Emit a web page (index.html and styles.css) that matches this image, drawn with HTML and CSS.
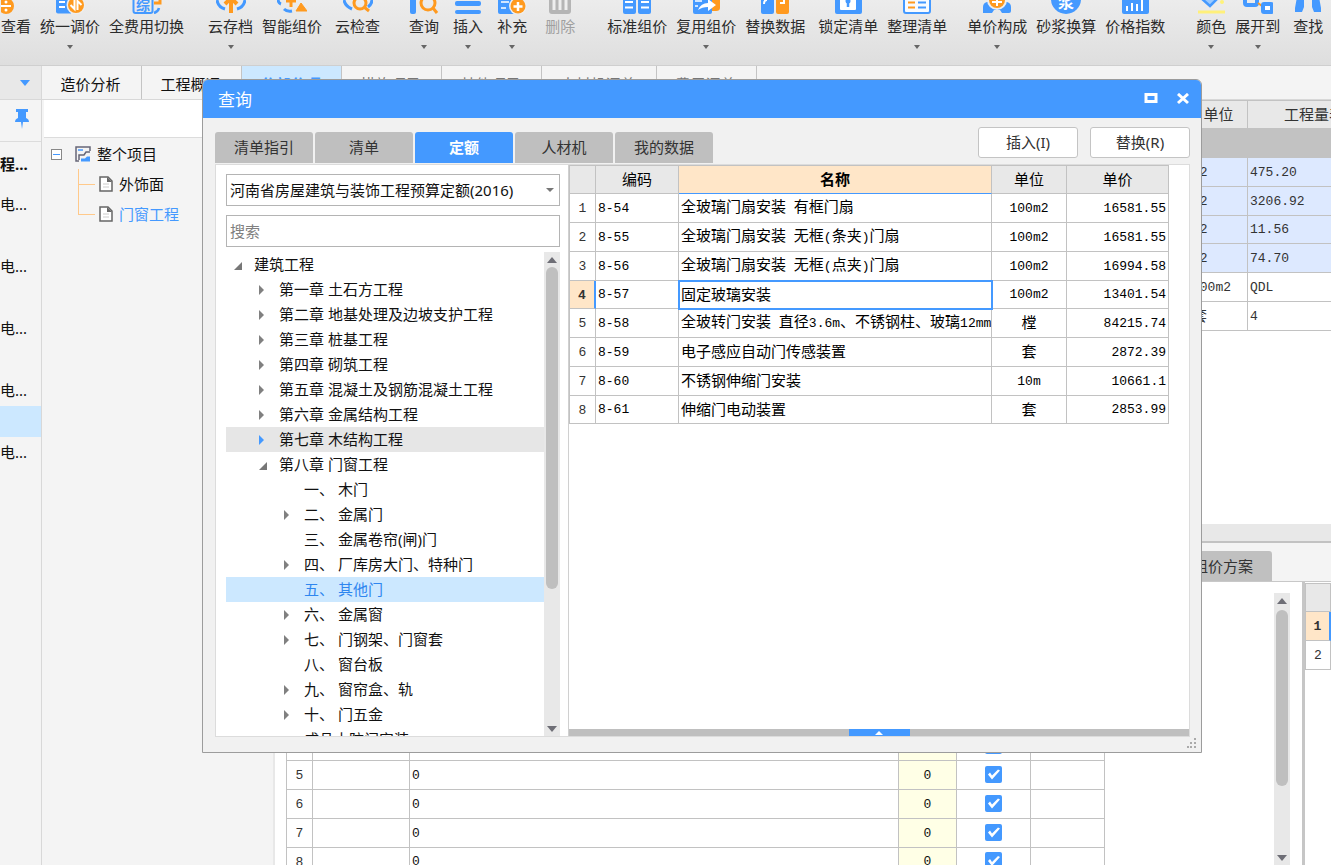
FILE: index.html
```html
<!DOCTYPE html>
<html lang="zh-CN">
<head>
<meta charset="utf-8">
<title>查询</title>
<link rel="stylesheet" href="styles.css">
</head>
<body>
<div class="app">
  <header class="toolbar">
    <div class="group first">
      <button class="tool"><svg viewBox="0 0 30 14"><circle cx="5" cy="6" r="8" fill="#ff9a1f"/><path d="M0 6h10" stroke="#fff" stroke-width="2"/><circle cx="5" cy="2" r="1.5" fill="#fff"/><circle cx="5" cy="10" r="1.5" fill="#fff"/></svg>查看</button>
      <button class="tool more"><svg viewBox="0 0 30 14"><path d="M1 0h15v13.500H3q-2 0-2-2z" fill="#49f"/><path d="M4 2h6M4 7h6" stroke="#fff" stroke-width="2"/><circle cx="21" cy="5" r="9.500" fill="#eee"/><circle cx="21" cy="5" r="8" fill="#ff9a1f"/><path d="M19.500 0v9l-4-4M22.500 10V1l4 4" fill="none" stroke="#fff" stroke-width="2"/></svg>统一调价</button>
      <button class="tool"><svg viewBox="0 0 30 14"><rect x="1.500" y="-8" width="19" height="21" rx="2" fill="none" stroke="#49f" stroke-width="2"/><text x="4" y="10" font-size="14" font-weight="700" fill="#49f">综</text><path d="M22 3h6V-2" fill="none" stroke="#ff9a1f" stroke-width="3"/><path d="M22 13q4-1 5-5" fill="none" stroke="#49f" stroke-width="2.500"/></svg>全费用切换</button>
    </div>
    <div class="group cloud">
      <button class="tool more"><svg viewBox="0 0 30 14"><path d="M1 0q1 7 8 9M29 0q-1 7-8 9" fill="none" stroke="#49f" stroke-width="3"/><path d="M15 13V-1M9 4l6-6 6 6" fill="none" stroke="#ff9a1f" stroke-width="4"/></svg>云存档</button>
      <button class="tool"><svg viewBox="0 0 30 14"><path d="M1-1q0 4 3 5M7 9q3 3 8 2" fill="none" stroke="#49f" stroke-width="3"/><path d="M14-3V7M9 1h10" stroke="#ff9a1f" stroke-width="3"/><path d="M19 11l5-8 6 8z" fill="#ff9a1f" stroke="#ff9a1f" stroke-linejoin="round"/></svg>智能组价</button>
      <button class="tool spaced"><svg viewBox="0 0 30 14"><path d="M1 0q1 6 8 9M29 0q0 4-4 7" fill="none" stroke="#49f" stroke-width="3"/><circle cx="17" cy="3" r="6" fill="none" stroke="#ff9a1f" stroke-width="3"/><path d="M21 7l5 4" stroke="#ff9a1f" stroke-width="3"/></svg>云检查</button>
    </div>
    <div class="group edit">
      <button class="tool more"><svg viewBox="0 0 30 14"><rect x="1" y="-6" width="6" height="20" rx="2" fill="#49f"/><circle cx="19" cy="3" r="7" fill="none" stroke="#ff9a1f" stroke-width="3"/><path d="M24 8l4 5" stroke="#ff9a1f" stroke-width="3"/></svg>查询</button>
      <button class="tool more"><svg viewBox="0 0 30 14"><rect x="2" y="1" width="26" height="5" rx="2" fill="#49f"/><rect x="2" y="10" width="26" height="4" rx="2" fill="#49f"/></svg>插入</button>
      <button class="tool more"><svg viewBox="0 0 30 14"><rect x="1" y="-6" width="17" height="20" rx="2" fill="#49f"/><path d="M4 2h8M4 8h5" stroke="#fff" stroke-width="1.500"/><circle cx="21" cy="6" r="9" fill="#eee"/><circle cx="21" cy="6" r="7.500" fill="#ff9a1f"/><path d="M21 2v9M16.500 6.500h9" stroke="#fff" stroke-width="2.500"/></svg>补充</button>
      <button class="tool spaced" disabled><svg viewBox="0 0 30 14"><rect x="4" y="-6" width="22" height="20" rx="3" fill="#b5b5b5"/><path d="M9 0v10M15 0v10M21 0v10" stroke="#eee" stroke-width="3"/></svg>删除</button>
    </div>
    <div class="group price">
      <button class="tool"><svg viewBox="0 0 30 14"><rect x="1" y="-6" width="13" height="20" rx="2" fill="#49f"/><rect x="16" y="-6" width="13" height="20" rx="2" fill="#49f"/><path d="M3 2h8M3 7.500h8M19 2h8M19 7.500h8" stroke="#fff" stroke-width="2"/></svg>标准组价</button>
      <button class="tool more"><svg viewBox="0 0 30 14"><path d="M19-2h8q2 0 2 2v8q0 3-4 3h-6z" fill="#ff9a1f"/><rect x="2" y="-6" width="19" height="20" rx="2" fill="#49f"/><path d="M4 1h7M4 6h3" stroke="#fff" stroke-width="1.500"/><path d="M7 10q3-7 10-7v-4l8 6-8 6V7q-6 0-10 3z" fill="#fff"/></svg>复用组价</button>
      <button class="tool"><svg viewBox="0 0 30 14"><rect x="1" y="-6" width="13" height="20" rx="2" fill="#49f"/><rect x="16" y="-6" width="13" height="20" rx="2" fill="#ff9a1f"/><path d="M4 4q0-4 3-4M24-1v4h-4" fill="none" stroke="#fff" stroke-width="2"/></svg>替换数据</button>
      <button class="tool spaced"><svg viewBox="0 0 30 14"><rect x="2" y="-6" width="27" height="20" rx="2" fill="#49f"/><rect x="7" y="-4" width="16" height="14" rx="1" fill="#fff"/><circle cx="15" cy="1" r="2.500" fill="#49f"/><path d="M15 1v6" stroke="#49f" stroke-width="2.500"/></svg>锁定清单</button>
      <button class="tool more"><svg viewBox="0 0 30 14"><rect x="2" y="-8" width="26" height="21" rx="2" fill="#f8fbff" stroke="#49f" stroke-width="2"/><path d="M6 2.500h7M6 7.500h7" stroke="#ff9a1f" stroke-width="2"/><path d="M16 2.500h8M16 7.500h8" stroke="#49f" stroke-width="2"/></svg>整理清单</button>
    </div>
    <div class="group calc">
      <button class="tool more"><svg viewBox="0 0 30 14"><path d="M1 13V7q0-4 4-5l20 0q4 1 4 5v4q0 2-2 2h-7l-2-3h-6l-2 3z" fill="#49f"/><circle cx="15" cy="0" r="10" fill="#eee"/><circle cx="15" cy="0" r="8" fill="#ff9a1f"/><path d="M15-3v9M10 2h10" stroke="#fff" stroke-width="2"/></svg>单价构成</button>
      <button class="tool"><svg viewBox="0 0 30 14"><circle cx="15" cy="-1" r="15" fill="#49f"/><text x="7" y="8" font-size="16" font-weight="700" fill="#fff">浆</text></svg>砂浆换算</button>
      <button class="tool"><svg viewBox="0 0 30 14"><rect x="2" y="-6" width="27" height="20" rx="2" fill="#49f"/><path d="M7 6v5M12 3v8M17 4v7M22-1v12" stroke="#fff" stroke-width="2"/></svg>价格指数</button>
    </div>
    <div class="group view">
      <button class="tool more"><svg viewBox="0 0 30 14"><path d="M5-2l9 8 9-9" fill="#9bcaff" stroke="#49f" stroke-width="2.500"/><circle cx="26" cy="2" r="2" fill="#fff37a"/><path d="M2 12h27" stroke="#fff07a" stroke-width="3"/></svg>颜色</button>
      <button class="tool more"><svg viewBox="0 0 30 14"><rect x="2" y="-5" width="12" height="10" rx="2" fill="none" stroke="#49f" stroke-width="4"/><path d="M15 3l4 3" stroke="#ff9a1f" stroke-width="2"/><rect x="20" y="4" width="9" height="8" rx="1" fill="#fff" stroke="#49f" stroke-width="4"/></svg>展开到</button>
      <button class="tool spaced"><svg viewBox="0 0 30 14"><path d="M4-3h7v10l-2 5H2V8zM19-3h7l2 11v4h-7l-2-5z" fill="#49f"/></svg>查找</button>
    </div>
  </header>

  <nav class="modules">
    <button class="picker" aria-label="切换"><i class="tri"></i></button>
    <button class="module">造价分析</button>
    <button class="module">工程概况</button>
    <button class="module active">分部分项</button>
    <button class="module dim">措施项目</button>
    <button class="module dim">其他项目</button>
    <button class="module dim wide">人材机汇总</button>
    <button class="module dim">费用汇总</button>
  </nav>

  <div class="workspace">
    <aside class="rail">
      <button class="pin" aria-label="固定"><svg width="16" height="20" viewBox="0 0 16 20"><path d="M2 0h12v3h-2v6q3 1 3 4H9l-1 7-1-7H1q0-3 3-4V3H2z" fill="#49f"/></svg></button>
      <ul>
        <li class="head">程...</li>
        <li>电...</li><li></li><li>电...</li><li></li><li>电...</li><li></li><li>电...</li>
        <li class="current"></li><li>电...</li>
      </ul>
    </aside>

    <aside class="project">
      <div class="project-top"></div>
      <ul class="project-tree">
        <li><button class="toggle" aria-label="折叠"></button>
          <svg width="16" height="16" viewBox="0 0 16 16"><path d="M15 5V1H1v14h3" fill="none" stroke="#667" stroke-width="1.500"/><path d="M3 4h5" stroke="#49f" stroke-width="1.500"/><path d="M4 14V9h5l2-3h4" fill="none" stroke="#667" stroke-width="1.500"/><path d="M6 15.500v-3h4l2-2h3v5z" fill="#49f"/></svg>
          <span>整个项目</span></li>
        <li class="leaf"><svg width="14" height="16" viewBox="0 0 14 16"><path d="M1 1h8l4 4v10H1z" fill="#fff" stroke="#666" stroke-width="1.500"/><path d="M8 1v5h5" fill="#666"/><path d="M4 8h6M4 11h6" stroke="#ccc"/></svg><span>外饰面</span></li>
        <li class="leaf chosen"><svg width="14" height="16" viewBox="0 0 14 16"><path d="M1 1h8l4 4v10H1z" fill="#fff" stroke="#666" stroke-width="1.500"/><path d="M8 1v5h5" fill="#666"/><path d="M4 8h6M4 11h6" stroke="#ccc"/></svg><span>门窗工程</span></li>
      </ul>
    </aside>

    <main class="main">
      <section class="upper">
        <table class="grid list">
          <colgroup><col><col class="c-unit"><col class="c-qty"></colgroup>
          <thead><tr><th></th><th>单位</th><th>工程量表达式</th></tr></thead>
          <tbody>
            <tr class="total"><td></td><td></td><td></td></tr>
            <tr class="tint"><td></td><td><b class="n">m2</b></td><td><b class="n">475.20</b></td></tr>
            <tr class="tint"><td></td><td><b class="n">m2</b></td><td><b class="n">3206.92</b></td></tr>
            <tr class="tint"><td></td><td><b class="n">m2</b></td><td><b class="n">11.56</b></td></tr>
            <tr class="tint"><td></td><td><b class="n">m2</b></td><td><b class="n">74.70</b></td></tr>
            <tr><td></td><td><b class="n">100m2</b></td><td><b class="n">QDL</b></td></tr>
            <tr><td></td><td>套</td><td><b class="n">4</b></td></tr>
          </tbody>
        </table>
      </section>
      <div class="hbar"></div>
      <div class="subtabs"><button>组价方案</button></div>
      <section class="lower">
        <div class="detail">
          <table class="grid">
            <colgroup><col class="c-no"><col class="c-a"><col><col class="c-b"><col class="c-d"><col class="c-d"></colgroup>
            <thead><tr><th></th><th></th><th></th><th></th><th></th><th></th></tr></thead>
            <tbody>
              <tr><td class="no">1</td><td></td><td><b class="n">0</b></td><td class="pale"><b class="n">0</b></td><td class="mid"><input type="checkbox" checked aria-label="1"></td><td></td></tr>
              <tr><td class="no">2</td><td></td><td><b class="n">0</b></td><td class="pale"><b class="n">0</b></td><td class="mid"><input type="checkbox" checked aria-label="2"></td><td></td></tr>
              <tr><td class="no">3</td><td></td><td><b class="n">0</b></td><td class="pale"><b class="n">0</b></td><td class="mid"><input type="checkbox" checked aria-label="3"></td><td></td></tr>
              <tr><td class="no">4</td><td></td><td><b class="n">0</b></td><td class="pale"><b class="n">0</b></td><td class="mid"><input type="checkbox" checked aria-label="4"></td><td></td></tr>
              <tr><td class="no">5</td><td></td><td><b class="n">0</b></td><td class="pale"><b class="n">0</b></td><td class="mid"><input type="checkbox" checked aria-label="5"></td><td></td></tr>
              <tr><td class="no">6</td><td></td><td><b class="n">0</b></td><td class="pale"><b class="n">0</b></td><td class="mid"><input type="checkbox" checked aria-label="6"></td><td></td></tr>
              <tr><td class="no">7</td><td></td><td><b class="n">0</b></td><td class="pale"><b class="n">0</b></td><td class="mid"><input type="checkbox" checked aria-label="7"></td><td></td></tr>
              <tr><td class="no">8</td><td></td><td><b class="n">0</b></td><td class="pale"><b class="n">0</b></td><td class="mid"><input type="checkbox" checked aria-label="8"></td><td></td></tr>
            </tbody>
          </table>
        </div>
        <div class="scroll"><i class="tri up"></i><i class="thumb"></i><i class="tri"></i></div>
        <div class="side">
          <table class="grid">
            <thead><tr><th></th></tr></thead>
            <tbody><tr><td class="no on">1</td></tr><tr><td class="no">2</td></tr></tbody>
          </table>
        </div>
      </section>
    </main>
  </div>

  <div class="dialog" role="dialog" aria-label="查询窗口">
    <div class="titlebar">
      <h1>查询</h1>
      <button aria-label="最大化"><svg width="14" height="12" viewBox="0 0 14 12"><rect x="2" y="1.500" width="10" height="7" fill="none" stroke="#fff" stroke-width="3"/></svg></button>
      <button aria-label="关闭"><svg width="14" height="12" viewBox="0 0 14 12"><path d="M2 1l10 9M12 1L2 10" stroke="#fff" stroke-width="3"/></svg></button>
    </div>
    <div class="dialog-body">
      <div class="dialog-head">
        <div class="tabs">
          <button>清单指引</button><button>清单</button><button class="active">定额</button><button>人材机</button><button>我的数据</button>
        </div>
        <div class="actions"><button>插入(I)</button><button>替换(R)</button></div>
      </div>
      <div class="panes">
        <div class="catalog">
          <div class="combo"><select aria-label="定额库"><option>河南省房屋建筑与装饰工程预算定额(2016)</option></select><i class="tri small"></i></div>
          <input class="search" type="text" placeholder="搜索" aria-label="搜索">
          <div class="tree-box">
            <ul class="tree">
              <li class="open">建筑工程</li>
              <li class="l1 shut">第一章 土石方工程</li>
              <li class="l1 shut">第二章 地基处理及边坡支护工程</li>
              <li class="l1 shut">第三章 桩基工程</li>
              <li class="l1 shut">第四章 砌筑工程</li>
              <li class="l1 shut">第五章 混凝土及钢筋混凝土工程</li>
              <li class="l1 shut">第六章 金属结构工程</li>
              <li class="l1 shut hover">第七章 木结构工程</li>
              <li class="l1 open">第八章 门窗工程</li>
              <li class="l2">一、 木门</li>
              <li class="l2 shut">二、 金属门</li>
              <li class="l2">三、 金属卷帘(闸)门</li>
              <li class="l2 shut">四、 厂库房大门、特种门</li>
              <li class="l2 selected">五、 其他门</li>
              <li class="l2 shut">六、 金属窗</li>
              <li class="l2 shut">七、 门钢架、门窗套</li>
              <li class="l2">八、 窗台板</li>
              <li class="l2 shut">九、 窗帘盒、轨</li>
              <li class="l2 shut">十、 门五金</li>
              <li class="l2">成品木防门安装</li>
            </ul>
            <div class="scroll"><i class="tri up"></i><i class="thumb tall"></i><i class="tri"></i></div>
          </div>
        </div>
        <div class="results">
          <table class="grid">
            <colgroup><col class="c-no"><col class="c-code"><col><col class="c-c"><col class="c-price"></colgroup>
            <thead><tr><th></th><th>编码</th><th class="on">名称</th><th>单位</th><th>单价</th></tr></thead>
            <tbody>
              <tr><td class="no">1</td><td><b class="n">8-54</b></td><td>全玻璃门扇安装<b class="n">&nbsp;</b>有框门扇</td><td class="mid"><b class="n">100m2</b></td><td class="end"><b class="n">16581.55</b></td></tr>
              <tr><td class="no">2</td><td><b class="n">8-55</b></td><td>全玻璃门扇安装<b class="n">&nbsp;</b>无框<b class="n">(</b>条夹<b class="n">)</b>门扇</td><td class="mid"><b class="n">100m2</b></td><td class="end"><b class="n">16581.55</b></td></tr>
              <tr><td class="no">3</td><td><b class="n">8-56</b></td><td>全玻璃门扇安装<b class="n">&nbsp;</b>无框<b class="n">(</b>点夹<b class="n">)</b>门扇</td><td class="mid"><b class="n">100m2</b></td><td class="end"><b class="n">16994.58</b></td></tr>
              <tr><td class="no on">4</td><td><b class="n">8-57</b></td><td class="focus">固定玻璃安装</td><td class="mid"><b class="n">100m2</b></td><td class="end"><b class="n">13401.54</b></td></tr>
              <tr><td class="no">5</td><td><b class="n">8-58</b></td><td>全玻转门安装<b class="n">&nbsp;</b>直径<b class="n">3.6m</b>、不锈钢柱、玻璃<b class="n">12mm</b></td><td class="mid">樘</td><td class="end"><b class="n">84215.74</b></td></tr>
              <tr><td class="no">6</td><td><b class="n">8-59</b></td><td>电子感应自动门传感装置</td><td class="mid">套</td><td class="end"><b class="n">2872.39</b></td></tr>
              <tr><td class="no">7</td><td><b class="n">8-60</b></td><td>不锈钢伸缩门安装</td><td class="mid"><b class="n">10m</b></td><td class="end"><b class="n">10661.1</b></td></tr>
              <tr><td class="no">8</td><td><b class="n">8-61</b></td><td>伸缩门电动装置</td><td class="mid">套</td><td class="end"><b class="n">2853.99</b></td></tr>
            </tbody>
          </table>
          <div class="splitter"><button aria-label="展开"><i class="tri up white"></i></button></div>
        </div>
      </div>
      <svg class="grip" width="10" height="10" viewBox="0 0 10 10"><path d="M7 0h2v2H7zM3 4h2v2H3zM7 4h2v2H7zM0 8h2v2H0zM3 8h2v2H3zM7 8h2v2H7z" fill="#aaa"/></svg>
    </div>
  </div>
</div>
</body>
</html>
```
FILE: styles.css
```css
* { box-sizing: border-box; }
body {
  margin: 0;
  font: 15px/20px "Noto Sans", "Noto Sans CJK SC", sans-serif;
  color: #111;
}
button, input, select { font: inherit; color: inherit; margin: 0; padding: 0; border: 0; background: none; }
ul { list-style: none; margin: 0; padding: 0; }
svg { display: block; flex: none; }

.app { position: relative; display: flex; flex-direction: column; height: 100vh; overflow: hidden; background: #f4f4f4; }

.tri { display: block; width: 0; height: 0; border: 5px solid transparent; border-top: 6px solid #6e6e76; border-bottom: 0; }
.tri.up { border-top: 0; border-bottom: 6px solid #6e6e76; }
.tri.small { border-width: 4px 4px 0; border-top-color: #777; }
.tri.white { border-width: 0 4px 4px; border-bottom-color: #fff; }

/* toolbar */
.toolbar { flex: none; display: flex; height: 66px; background: linear-gradient(#ececec, #dedede); border-bottom: 1px solid #cfcfcf; }
.group { display: flex; gap: 9px; flex: none; }
.group.first { padding-left: 1px; }
.group.cloud { margin-left: 24px; }
.group.edit { margin-left: 29px; gap: 14px; }
.group.price { margin-left: 32px; }
.group.calc { margin-left: 20px; }
.group.view { margin-left: 31px; }
.tool { display: flex; flex-direction: column; align-items: center; gap: 2px; color: #2b2b2b; white-space: nowrap; }
.tool svg { width: 30px; height: 14px; overflow: hidden; }
.tool.spaced { margin-left: 4px; }
.tool:disabled { color: #a0a0a0; }
.tool.more::after { content: ""; margin-top: 7px; border: 3px solid transparent; border-top: 4px solid #666; border-bottom: 0; }

/* module tabs */
.modules { flex: none; display: flex; height: 34px; border-bottom: 1px solid #d8d8d8; }
.picker { width: 42px; padding: 0 12px 0 20px; background: #e8e8e8; border-right: 1px solid #d8d8d8; }
.picker .tri { border-top-color: #49f; }
.module { width: 100px; padding: 2px 2px 0 0; border-right: 1px solid #c4c4c4; }
.module.wide { width: 115px; }
.module.dim { color: #777; }
.module.active { background: #cce8ff; color: #49f; font-weight: 700; }

.workspace { flex: 1; min-height: 0; display: flex; }
.rail { width: 42px; flex: none; border-right: 1px solid #d8d8d8; overflow: hidden; }
.pin { display: flex; width: 100%; height: 42px; padding: 9px 0 0 14px; border-bottom: 1px solid #dcdcdc; }
.rail li { height: 31px; line-height: 31px; white-space: nowrap; }
.rail .head { height: 47px; line-height: 44px; font-weight: 700; }
.rail .current { background: #cce8ff; }

.project { width: 233px; flex: none; padding-left: 2px; border-right: 2px solid #e8e8e8; }
.project-top { height: 38px; background: #fff; border-bottom: 1px solid #dcdcdc; }
.project-tree { padding: 1px 0 0 7px; }
.project-tree li { display: flex; align-items: center; height: 30px; position: relative; }
.toggle { width: 11px; height: 11px; border: 1px solid #888; background: linear-gradient(#49f, #49f) center / 7px 1px no-repeat #fff; margin-right: 13px; }
.project-tree span { margin-left: 6px; }
.project-tree .leaf { padding-left: 48px; }
.leaf::before { content: ""; position: absolute; left: 27px; top: -15px; width: 16px; height: 30px; border-left: 1px solid #ffc98a; border-bottom: 1px solid #ffc98a; }
.leaf:nth-child(2)::before { top: 0; height: 15px; }
.chosen span { color: #49f; }

.main { flex: 1; min-width: 0; display: flex; flex-direction: column; }
.upper { height: 424px; flex: none; background: #fff; overflow: hidden; }
.hbar { height: 19px; flex: none; background: #e8e8e8; border-bottom: 2px solid #c2c2c2; }
.subtabs { height: 39px; flex: none; display: flex; align-items: flex-end; justify-content: flex-end; padding-right: 59px; border-bottom: 1px solid #c8c8c8; }
.subtabs button { width: 98px; height: 30px; background: #c0c0c0; border-radius: 3px 3px 0 0; color: #333; }
.lower { flex: 1; min-height: 0; display: flex; background: #fff; overflow: hidden; }
.detail { flex: 1; padding: 35px 169px 0 11px; }
.lower .scroll { margin: 11px 12px 0 0; }
.side { width: 29px; flex: none; overflow: hidden; padding-top: 1px; border-left: 3px solid #c6c6c6; }

/* grids */
.grid { width: 100%; table-layout: fixed; border-spacing: 0; border-top: 1px solid #c2c2c2; border-left: 1px solid #c2c2c2; line-height: 20px; }
.grid th, .grid td { height: 29px; padding: 0 2px 2px; border: solid #c2c2c2; border-width: 0 1px 1px 0; white-space: nowrap; overflow: hidden; font-weight: 400; text-align: left; background: #fff; }
.grid th { height: 28px; background: #e8e8e8; text-align: center; }
.grid tr:nth-child(4n) td { height: 28px; }
.grid .n { font: 13px/20px "Liberation Mono", monospace; }
.grid .no { padding: 2px 2px 0; font: 13px/20px "Liberation Mono", monospace; text-align: center; color: #333; }
.grid .mid, .grid .pale { text-align: center; }
.grid .end { text-align: right; }
.grid .pale { background: #ffffe6; }
.grid th.on { background: #ffe6c8; font-weight: 700; border-bottom-color: #49f; }
.grid .no.on { background: #ffe6c8; font-weight: 700; border-right: 2px solid #49f; }
.grid .focus { outline: 2px solid #49f; outline-offset: -1px; }
.c-no { width: 26px; }
.c-code { width: 83px; }
.c-a { width: 97px; }
.c-b { width: 58px; }
.c-c { width: 75px; }
.c-d { width: 74px; }
.c-price { width: 102px; }
.c-unit { width: 58px; }
.c-qty { width: 163px; }
.list { width: calc(100% + 80px); color: #333; }
.list .total td { background: #c2c2c2; }
.list .tint td { background: #dde9ff; }
input[type="checkbox"] { appearance: none; display: block; width: 17px; height: 17px; margin: 0 auto; border-radius: 2px; background: #49f; }
input[type="checkbox"]::before { content: ""; display: block; width: 17px; height: 17px; background: #fff; clip-path: polygon(3px 9px, 5px 7px, 7px 10px, 13px 4px, 15px 5px, 7px 14px); }

.scroll { width: 16px; flex: none; display: flex; flex-direction: column; align-items: center; padding: 5px 0 4px; background: #e8e8e8; }
.thumb { width: 12px; height: 176px; margin: 6px 0 auto; border-radius: 6px; background: #bfbfbf; }
.thumb.tall { height: 322px; margin-top: 4px; }

/* dialog */
.dialog { position: absolute; left: 202px; right: 129px; top: 79px; bottom: 112px; display: flex; flex-direction: column; border: 1px solid #9c9c9c; border-radius: 6px 6px 0 0; background: #f1f1f1; overflow: hidden; }
.titlebar { flex: none; display: flex; align-items: center; gap: 18px; height: 38px; padding: 0 11px 0 15px; background: #49f; color: #fff; }
.titlebar h1 { flex: 1; margin: 2px 0 0; font-size: 17px; font-weight: 400; }
.dialog-body { flex: 1; min-height: 0; display: flex; flex-direction: column; padding: 9px 11px 15px 12px; position: relative; }
.dialog-head { flex: none; display: flex; justify-content: space-between; height: 37px; }
.tabs { display: flex; align-items: flex-end; gap: 2px; padding-bottom: 1px; }
.tabs button { width: 98px; height: 31px; padding-bottom: 2px; background: #bfbfbf; border-radius: 3px 3px 0 0; color: #333; }
.tabs .active { background: #49f; color: #fff; font-weight: 700; }
.actions { display: flex; gap: 12px; }
.actions button { width: 100px; height: 31px; padding-bottom: 2px; background: #fff; border: 1px solid #c4c4c4; border-radius: 3px; color: #333; }
.panes { flex: 1; min-height: 0; display: flex; background: #fff; border: 1px solid #dcdcdc; }
.catalog { width: 353px; flex: none; display: flex; flex-direction: column; gap: 9px; padding: 9px 8px 0 10px; border-right: 1px solid #d0d0d0; }
.combo { flex: none; position: relative; height: 32px; }
.combo select { appearance: none; width: 100%; height: 100%; padding: 0 3px; border: 1px solid #b4b4b4; background: #fff; }
.combo .tri { position: absolute; right: 6px; top: 14px; pointer-events: none; }
.search { flex: none; height: 32px; padding: 0 3px; border: 1px solid #b4b4b4; }
.search::placeholder { color: #808080; opacity: 1; }
.tree-box { flex: 1; min-height: 0; display: flex; margin-top: -4px; }
.tree { flex: 1; overflow: hidden; }
.tree li { position: relative; height: 25px; line-height: 25px; padding-left: 28px; white-space: pre; }
.tree .l1 { padding-left: 53px; }
.tree .l2 { padding-left: 78px; }
.shut::before { content: ""; display: inline-block; margin: 0 15px 0 -20px; border: 5px solid transparent; border-left-color: #808080; border-right: 0; }
.open::before { content: ""; display: inline-block; margin: 0 12px 0 -20px; border: 4px solid transparent; border-right-color: #777; border-bottom-color: #777; }
.hover { background: #e6e6e6; }
.hover::before { border-left-color: #49f; }
.selected { background: #cce8ff; color: #2f86ef; }
.results { flex: 1; min-width: 0; display: flex; flex-direction: column; justify-content: space-between; }
.results .grid { width: calc(100% - 20px); color: #000; }
.splitter { display: flex; justify-content: center; height: 7px; background: #bfbfbf; }
.splitter button { display: flex; align-items: center; justify-content: center; width: 61px; height: 7px; background: #49f; }
.grip { position: absolute; right: 4px; bottom: 4px; }
```
